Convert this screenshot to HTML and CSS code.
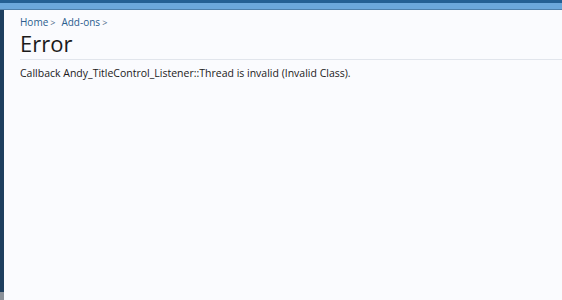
FILE: index.html
```html
<!DOCTYPE html>
<html lang="en">
<head>
  <meta charset="UTF-8">
  <title>Error</title>
  <link rel="stylesheet" href="styles.css">
</head>
<body>
  <div class="topbar"></div>
  <div class="subbar"></div>
  <div class="page">
    <div class="sidebar"></div>
    <div class="content">
      <nav class="breadcrumb">
        <a href="#">Home</a><span class="sep">&gt;</span><a href="#">Add-ons</a><span class="sep">&gt;</span>
      </nav>
      <h1 class="title">Error</h1>
      <p class="message">Callback Andy_TitleControl_Listener::Thread is invalid (Invalid Class).</p>
    </div>
  </div>
</body>
</html>
```

FILE: styles.css
```css
* {
  margin: 0;
  padding: 0;
  box-sizing: border-box;
}

html, body {
  height: 100%;
}

body {
  font-family: "Open Sans", "DejaVu Sans", sans-serif;
  background-color: #fafbfe;
  color: #222;
  display: flex;
  flex-direction: column;
  overflow: hidden;
}

.topbar {
  height: 3px;
  background-color: #235f93;
}

.subbar {
  height: 7px;
  background-color: #6ba7db;
  border-bottom: 1px solid #4d7fab;
}

.page {
  flex: 1;
  display: flex;
}

.sidebar {
  width: 4px;
  background-color: #1e3f5f;
  border-bottom: 8px solid #8a9199;
}

.content {
  flex: 1;
  padding-left: 16px;
}

.breadcrumb {
  margin-top: 5px;
  font-size: 10px;
  line-height: 14px;
}

.breadcrumb a {
  color: #2b5d8e;
  text-decoration: none;
}

.breadcrumb .sep {
  color: #4a6a88;
  font-size: 9px;
  margin: 0 6px 0 2px;
}

.title {
  font-size: 22px;
  font-weight: normal;
  color: #1a1a1a;
  line-height: 26px;
  padding-bottom: 3px;
  border-bottom: 1px solid #e1e5ec;
}

.message {
  margin-top: 6px;
  font-size: 10.5px;
  line-height: 14px;
  color: #1a1a1a;
}
```
